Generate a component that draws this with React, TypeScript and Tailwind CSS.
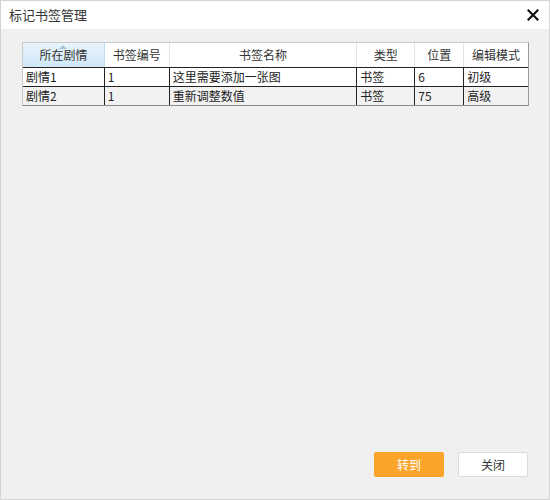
import React from "react";

const cols = [
  { label: "所在剧情", w: "w-[82px]" },
  { label: "书签编号", w: "w-[65px]" },
  { label: "书签名称", w: "w-[188px]" },
  { label: "类型", w: "w-[58px]" },
  { label: "位置", w: "w-[49px]" },
  { label: "编辑模式", w: "w-[64px]" },
];

const rows = [
  ["剧情1", "1", "这里需要添加一张图", "书签", "6", "初级"],
  ["剧情2", "1", "重新调整数值", "书签", "75", "高级"],
];

export default function App() {
  return (
    <div
      className="w-[550px] h-[500px] bg-[#f0f0f0] border border-[#d4d4d4] flex flex-col text-[12px] text-[#222]"
      style={{ fontFamily: '"Noto Sans CJK SC", "Noto Sans", sans-serif' }}
    >
      <div className="h-[28px] bg-white flex items-center justify-between pl-[8px] pr-[10px] shrink-0">
        <span className="text-[13px] text-[#333]">标记书签管理</span>
        <svg width="12" height="12" viewBox="0 0 12 12">
          <path d="M1.5 1.5 L10.5 10.5 M10.5 1.5 L1.5 10.5" stroke="#111" strokeWidth="2.2" strokeLinecap="square" />
        </svg>
      </div>
      <div className="flex-1 flex flex-col px-[21px] pt-[13px] pb-[22px]">
        <div className="w-[507px] bg-white border border-[#c8c8c8] border-b-[#8a8a8a] border-r-[#9a9a9a] self-start">
          <div className="flex h-[24px]">
            {cols.map((c, i) => (
              <div
                key={c.label}
                className={`${c.w} relative flex items-center justify-center border-r border-[#e3e3e3] last:border-r-0 ${
                  i === 0 ? "bg-gradient-to-b from-[#e8f4fc] to-[#cfe7f7] border-r-[#bcdcf0]" : "bg-white"
                }`}
              >
                {i === 0 && (
                  <svg className="absolute top-[1px] left-1/2 -translate-x-1/2" width="8" height="5" viewBox="0 0 8 5">
                    <path d="M0 5 L4 1 L8 5 Z" fill="#a9c4d8" />
                  </svg>
                )}
                <span className="text-[#333]">{c.label}</span>
              </div>
            ))}
          </div>
          {rows.map((r, ri) => (
            <div
              key={ri}
              className={`flex h-[19px] border-t border-[#222] ${ri === 1 ? "bg-[#f2f2f2]" : "bg-white"}`}
            >
              {r.map((cell, ci) => (
                <div
                  key={ci}
                  className={`${cols[ci].w} flex items-center pl-[3px] border-r border-[#222] last:border-r-0 leading-none`}
                >
                  {cell}
                </div>
              ))}
            </div>
          ))}
        </div>
        <div className="flex-1" />
        <div className="flex justify-end gap-[14px]">
          <button className="w-[70px] h-[25px] rounded-[2px] bg-[#fba42a] text-white text-[12px]">转到</button>
          <button className="w-[70px] h-[25px] rounded-[2px] bg-white border border-[#dcdcdc] text-[#333] text-[12px]">
            关闭
          </button>
        </div>
      </div>
    </div>
  );
}
